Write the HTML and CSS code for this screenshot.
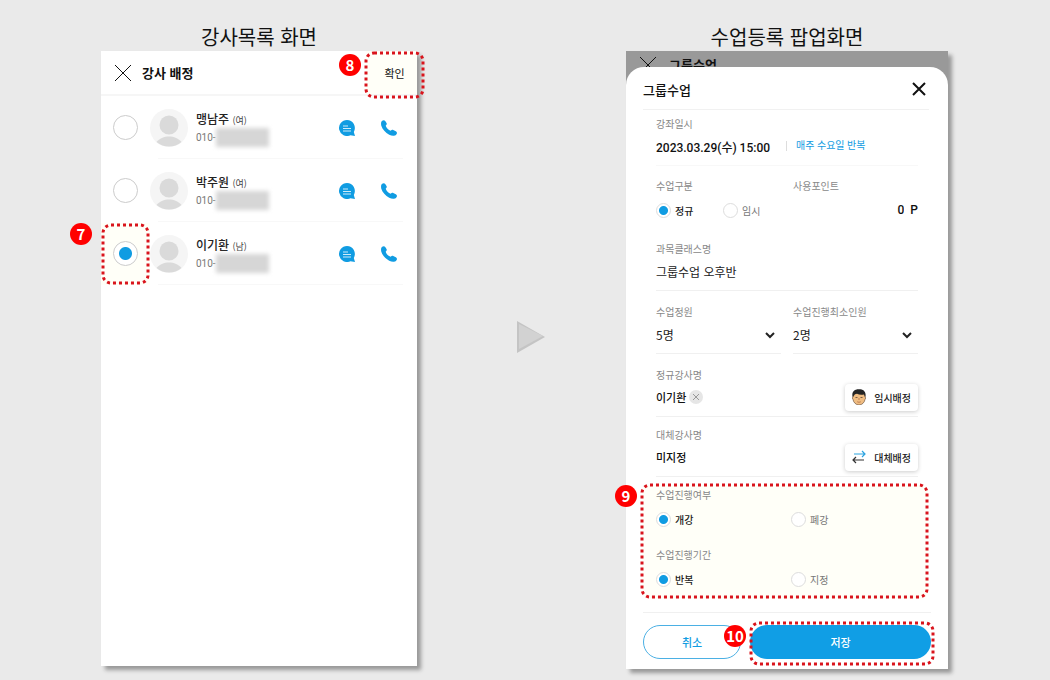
FILE: index.html
```html
<!DOCTYPE html>
<html lang="ko">
<head>
    <meta charset="UTF-8">
    <meta name="viewport" content="width=device-width, initial-scale=1.0">
    <title>강사 배정</title>
    <link rel="stylesheet" href="styles.css">
</head>
<body>
    <svg class="defs" width="0" height="0" aria-hidden="true">
        <symbol id="avatar" viewBox="0 0 38 38">
            <circle cx="19" cy="19" r="19" fill="#f5f5f5"/>
            <circle cx="19" cy="16" r="9.5" fill="#dadada"/>
            <path d="M6.500 33C12 25.500 26 25.500 31.500 33Q26 37.500 19 37.500T6.500 33Z" fill="#dadada"/>
        </symbol>
        <symbol id="chat" viewBox="0 0 16 16">
            <path d="M8 0a8 8 0 1 0 3.500 15.200L16 16l-1.200-4A8 8 0 0 0 8 0Z" fill="#109ce2"/>
            <path d="M4 6h5M4 8.500h8M4 11h8" stroke="#fff" stroke-width="0.800"/>
        </symbol>
        <symbol id="phone" viewBox="0 0 16 16">
            <path d="M1.200.8C2.300-.2 3.600 0 4.400 1.200l1.100 1.900c.6 1 .2 1.700-.8 2.600.6 2.200 2.700 4.300 5 5.100.9-1.100 1.600-1.400 2.600-.8l2.500 1.300c1.400.9 1.500 2 .5 3.100-1.600 2-4.300 1.800-7.100.3C4.400 12.600 1.500 9.400.3 5.700-.2 3.600 0 1.900 1.200.8Z" fill="#109ce2"/>
        </symbol>
        <symbol id="close" viewBox="0 0 18 18">
            <path d="M1 1l16 16M17 1L1 17" fill="none" stroke="currentColor"/>
        </symbol>
    </svg>

    <main class="guide">
        <section class="step">
            <h2 class="step-title">강사목록 화면</h2>
            <div class="screen list-screen">
                <header class="list-header">
                    <button class="icon-btn" aria-label="닫기"><svg width="18" height="18"><use href="#close"/></svg></button>
                    <h3>강사 배정</h3>
                    <div class="confirm-wrap">
                        <button class="confirm">확인</button>
                        <svg class="ring"><rect x="2" y="2" rx="8"/></svg>
                        <span class="badge">8</span>
                    </div>
                </header>
                <ul class="teachers">
                    <li>
                        <label class="pick"><input type="radio" name="teacher" aria-label="맹남주"></label>
                        <svg class="avatar"><use href="#avatar"/></svg>
                        <div class="info">
                            <p class="name">맹남주 <small>(여)</small></p>
                            <p class="tel">010-<span class="masked"></span></p>
                        </div>
                        <button class="icon-btn" aria-label="메시지"><svg width="16" height="16"><use href="#chat"/></svg></button>
                        <button class="icon-btn" aria-label="전화"><svg width="16" height="16"><use href="#phone"/></svg></button>
                    </li>
                    <li>
                        <label class="pick"><input type="radio" name="teacher" aria-label="박주원"></label>
                        <svg class="avatar"><use href="#avatar"/></svg>
                        <div class="info">
                            <p class="name">박주원 <small>(여)</small></p>
                            <p class="tel">010-<span class="masked"></span></p>
                        </div>
                        <button class="icon-btn" aria-label="메시지"><svg width="16" height="16"><use href="#chat"/></svg></button>
                        <button class="icon-btn" aria-label="전화"><svg width="16" height="16"><use href="#phone"/></svg></button>
                    </li>
                    <li>
                        <label class="pick picked">
                            <input type="radio" name="teacher" aria-label="이기환" checked>
                            <svg class="ring"><rect x="2" y="2" rx="8"/></svg>
                            <span class="badge">7</span>
                        </label>
                        <svg class="avatar"><use href="#avatar"/></svg>
                        <div class="info">
                            <p class="name">이기환 <small>(남)</small></p>
                            <p class="tel">010-<span class="masked"></span></p>
                        </div>
                        <button class="icon-btn" aria-label="메시지"><svg width="16" height="16"><use href="#chat"/></svg></button>
                        <button class="icon-btn" aria-label="전화"><svg width="16" height="16"><use href="#phone"/></svg></button>
                    </li>
                </ul>
            </div>
        </section>

        <svg class="next" viewBox="0 0 28 32" aria-hidden="true">
            <path d="M0 0L28 16L0 32Z" fill="#c4c4c4"/>
            <path d="M2 3L26 15L2 28Z" fill="#d2d2d2"/>
        </svg>

        <section class="step">
            <h2 class="step-title">수업등록 팝업화면</h2>
            <div class="screen popup-screen">
                <div class="behind">
                    <svg width="18" height="18"><use href="#close"/></svg>
                    <span>그룹수업</span>
                </div>
                <form class="sheet">
                    <header class="sheet-header">
                        <h3>그룹수업</h3>
                        <button type="button" class="icon-btn" aria-label="닫기">
                            <svg width="14" height="14" viewBox="0 0 14 14"><path d="M1 1l12 12M13 1L1 13" stroke="#111" stroke-width="2"/></svg>
                        </button>
                    </header>

                    <div class="fields">
                        <div class="field faint">
                            <span class="label">강좌일시</span>
                            <div class="value date">2023.03.29(수) 15:00 <span class="repeat">매주 수요일 반복</span></div>
                        </div>
                        <div class="pair">
                            <div class="field bare" role="radiogroup" aria-label="수업구분">
                                <span class="label">수업구분</span>
                                <div class="value choices">
                                    <label><input type="radio" name="kind" checked><span>정규</span></label>
                                    <label><input type="radio" name="kind"><span>임시</span></label>
                                </div>
                            </div>
                            <div class="field bare">
                                <label class="label" for="point">사용포인트</label>
                                <div class="value point"><input id="point" type="text" value="0"><span>P</span></div>
                            </div>
                        </div>
                        <div class="field">
                            <label class="label" for="subject">과목클래스명</label>
                            <div class="value"><input id="subject" type="text" value="그룹수업 오후반"></div>
                        </div>
                        <div class="pair">
                            <div class="field">
                                <label class="label" for="max">수업정원</label>
                                <div class="value select">
                                    <select id="max"><option>5명</option></select>
                                    <svg width="10" height="7" viewBox="0 0 10 7"><path d="M1 1l4 4 4-4" fill="none" stroke="#222" stroke-width="2"/></svg>
                                </div>
                            </div>
                            <div class="field">
                                <label class="label" for="min">수업진행최소인원</label>
                                <div class="value select">
                                    <select id="min"><option>2명</option></select>
                                    <svg width="10" height="7" viewBox="0 0 10 7"><path d="M1 1l4 4 4-4" fill="none" stroke="#222" stroke-width="2"/></svg>
                                </div>
                            </div>
                        </div>
                        <div class="field tight">
                            <span class="label">정규강사명</span>
                            <div class="value person">이기환
                                <button type="button" class="clear" aria-label="삭제"><svg width="8" height="8" viewBox="0 0 8 8"><path d="M1 1l6 6M7 1L1 7" stroke="#999"/></svg></button>
                                <button type="button" class="assign">
                                    <svg width="14" height="16" viewBox="0 0 14 16">
                                        <path d="M1 6C1 3 3 2 7 2s6 1 6 4v2q1.500.5 0 2.500C12.500 13.500 10 16 7 16S1.500 13.500 1 10.500Q-.5 8.500 1 8Z" fill="#f0bd82" stroke="#5b4536" stroke-width="0.600"/>
                                        <path d="M.8 8.200C-.6 3 2 .3 6.500.2 11.500 0 14.500 2.500 13.200 8.200L12 5.500Q8 6.500 5 4.800 2.500 5 2 6.500Z" fill="#252525"/>
                                        <path d="M3.500 8.500h2M8.500 8.500h2" stroke="#5b4536" stroke-width="0.800"/>
                                        <path d="M7 9v2M5.200 12.800q1.800 1 3.600 0" fill="none" stroke="#a86440" stroke-width="0.700"/>
                                    </svg>
                                    임시배정
                                </button>
                            </div>
                        </div>
                        <div class="field tight">
                            <span class="label">대체강사명</span>
                            <div class="value person">미지정
                                <button type="button" class="assign">
                                    <svg width="14" height="14" viewBox="0 0 14 14" fill="none">
                                        <path d="M2 4h11M10 1l3 3-3 3" stroke="#2ba3e0" stroke-width="1.200"/>
                                        <path d="M12 10H1M4 7l-3 3 3 3" stroke="#333" stroke-width="1.200"/>
                                    </svg>
                                    대체배정
                                </button>
                            </div>
                        </div>
                        <div class="marked">
                            <div class="field tight bare" role="radiogroup" aria-label="수업진행여부">
                                <span class="label">수업진행여부</span>
                                <div class="value choices wide">
                                    <label><input type="radio" name="open" checked><span>개강</span></label>
                                    <label><input type="radio" name="open"><span>폐강</span></label>
                                </div>
                            </div>
                            <div class="field tight bare" role="radiogroup" aria-label="수업진행기간">
                                <span class="label">수업진행기간</span>
                                <div class="value choices wide">
                                    <label><input type="radio" name="period" checked><span>반복</span></label>
                                    <label><input type="radio" name="period"><span>지정</span></label>
                                </div>
                            </div>
                            <svg class="ring"><rect x="2" y="2" rx="8"/></svg>
                            <span class="badge">9</span>
                        </div>
                    </div>

                    <footer class="actions">
                        <button type="button" class="cancel">취소</button>
                        <div class="save-wrap">
                            <button type="button" class="save">저장</button>
                            <svg class="ring"><rect x="2" y="2" rx="8"/></svg>
                            <span class="badge">10</span>
                        </div>
                    </footer>
                </form>
            </div>
        </section>
    </main>
</body>
</html>
```
FILE: styles.css
```css
* { box-sizing: border-box; }
body { margin: 0; min-height: 100vh; background: #eaeaea; color: #222; font-family: "Noto Sans CJK KR", sans-serif; font-size: 12px; }
h2, h3, p, ul { margin: 0; padding: 0; }
button, input, select { font: inherit; color: inherit; border: 0; background: none; padding: 0; margin: 0; }
svg { display: block; }
.defs { position: absolute; }

.guide { display: grid; grid-template-columns: 316fr 209px 322fr; padding: 0 102px 11px 101px; }
.step-title { height: 51px; padding-top: 22px; font-size: 20px; line-height: 29px; font-weight: 400; text-align: center; color: #111; }
.screen { background: #fff; box-shadow: 4px 4px 4px rgba(0, 0, 0, 0.35); }
.next { width: 28px; height: 32px; align-self: center; justify-self: center; margin: 4px 0 0 18px; }
.icon-btn { display: flex; align-items: center; justify-content: center; flex: none; }

/* numbered callouts */
.ring { position: absolute; overflow: visible; pointer-events: none; }
.ring rect { width: calc(100% - 4px); height: calc(100% - 4px); fill: none; stroke: #d9141c; stroke-width: 3px; stroke-dasharray: 3 3; }
.badge { position: absolute; width: 22px; height: 22px; border-radius: 50%; background: #f00; color: #fff; font-size: 15px; line-height: 22px; font-weight: 700; text-align: center; }

/* teacher list */
.list-screen { min-height: 615px; }
.list-header { display: flex; align-items: center; height: 45px; padding-left: 13px; border-bottom: 2px solid #f6f6f6; color: #111; }
.list-header h3 { margin-left: 10px; font-size: 13px; font-weight: 700; }
.confirm-wrap { position: relative; width: 51px; height: 43px; margin-left: auto; }
.confirm { width: 100%; height: 100%; padding-left: 6px; background: #fffff8; font-size: 11px; }
.confirm-wrap .ring { left: -2px; top: 0; width: 61px; height: 48px; }
.confirm-wrap .badge { left: -27px; top: 3px; }
.teachers { list-style: none; }
.teachers li { position: relative; display: flex; align-items: center; height: 63px; padding-right: 20px; }
.teachers li::after { content: ""; position: absolute; left: 57px; right: 14px; bottom: 0; height: 1px; background: #f8f8f8; }
.pick { position: relative; display: flex; align-items: center; justify-content: center; width: 49px; height: 62px; }
.picked { background: #fffff8; }
.pick .ring { left: 0; top: 0; width: 49px; height: 62px; }
.pick .badge { left: -31px; top: 0; }
.avatar { width: 38px; height: 38px; }
.info { flex: 1; margin-left: 8px; }
.name { line-height: 17px; font-weight: 500; }
.name small { font-size: 9px; font-weight: 400; color: #444; }
.tel { display: flex; align-items: center; height: 16px; font-family: Roboto, sans-serif; font-size: 10px; color: #777; }
.masked { width: 53px; height: 19px; background: #d6d6d6; filter: blur(2px); }
.teachers .icon-btn + .icon-btn { margin-left: 26px; }

input[type="radio"] { appearance: none; flex: none; width: 15px; height: 15px; border: 1px solid #ddd; border-radius: 50%; background: #fff; }
input[type="radio"]:checked { background: radial-gradient(circle, #109ce2 4px, #fff 5px); }
.pick input[type="radio"] { width: 25px; height: 25px; border-color: #ccc; }
.pick input[type="radio"]:checked { background: radial-gradient(circle, #109ce2 6px, #fff 7px); }

/* class popup */
.popup-screen { background: #999; }
.behind { display: flex; height: 16px; padding: 5px 13px 0; gap: 12px; color: #111; font-size: 13px; line-height: 18px; font-weight: 700; }
.behind svg { flex: none; }
.sheet { position: relative; background: #fff; border-radius: 18px 18px 0 0; }
.sheet-header { display: flex; align-items: center; justify-content: space-between; height: 43px; margin: 0 19px 0 17px; padding-right: 3px; padding-top: 2px; border-bottom: 1px solid #f1f1f1; }
.sheet-header h3 { font-size: 13px; font-weight: 500; color: #111; }
.fields { padding: 6px 30px 15px; }
.field { height: 50px; margin-bottom: 13px; border-bottom: 1px solid #f0f0f0; }
.field.tight { margin-bottom: 10px; }
.field.faint { margin-bottom: 12px; border-color: #f8f8f8; }
.field.bare { border-color: transparent; }
.label { display: block; font-size: 10px; line-height: 16px; color: #888; }
.value { display: flex; align-items: center; height: 28px; color: #222; }
.value input[type="text"] { width: 100%; height: 24px; }
.pair { display: grid; grid-template-columns: minmax(0, 1fr) minmax(0, 1fr); gap: 12px; }
.date { font-family: Roboto, "Noto Sans CJK KR", sans-serif; font-weight: 500; color: #111; }
.repeat { margin-left: 16px; padding-left: 9px; border-left: 1px solid #ddd; font-size: 10px; line-height: 10px; font-weight: 400; color: #109ce2; }
.choices, .point { height: 32px; }
.choices label { display: flex; align-items: center; flex: none; width: 67px; font-size: 10px; color: #777; }
.choices input { margin-right: 4px; }
.choices input:checked + span { color: #222; font-weight: 500; }
.choices.wide { display: grid; grid-template-columns: 1fr 1fr; gap: 8px; }
.point { gap: 6px; font-family: Roboto, sans-serif; font-weight: 500; color: #111; }
.point input { flex: 1; min-width: 0; text-align: right; }
.select { position: relative; }
.select select { appearance: none; width: 100%; height: 24px; }
.select svg { position: absolute; right: 6px; bottom: 9px; pointer-events: none; }
.person { font-size: 11px; font-weight: 500; color: #111; }
.clear { display: flex; align-items: center; justify-content: center; width: 14px; height: 14px; margin-left: 3px; border-radius: 50%; background: #e6e6e6; }
.assign { display: flex; align-items: center; gap: 8px; height: 27px; margin-left: auto; padding: 0 7px; border-radius: 4px; background: #fff; box-shadow: 0 1px 4px rgba(0, 0, 0, 0.2); font-size: 10px; color: #222; }
.marked { position: relative; }
.marked::before { content: ""; position: absolute; inset: -2px -10px -2px -14px; background: #fffff8; border-radius: 8px; }
.marked .field { position: relative; }
.marked .field:nth-child(2) { margin-bottom: 0; }
.marked .ring { left: -16px; top: -4px; width: calc(100% + 27px); height: calc(100% + 6px); }
.marked .badge { left: -41px; top: -2px; }

.actions { display: flex; gap: 9px; margin: 0 17px; padding: 12px 0 10px; border-top: 1px solid #f0f0f0; font-size: 11px; }
.cancel { width: 98px; height: 34px; border: 1px solid #4bb0e4; border-radius: 17px; color: #109ce2; font-weight: 500; }
.save-wrap { position: relative; flex: 1; }
.save { width: 100%; height: 34px; border-radius: 17px; background: #109ee5; color: #fff; font-weight: 500; }
.save-wrap .ring { left: -1px; top: -4px; width: calc(100% + 5px); height: 45px; }
.save-wrap .badge { left: -26px; top: 0; }
```
